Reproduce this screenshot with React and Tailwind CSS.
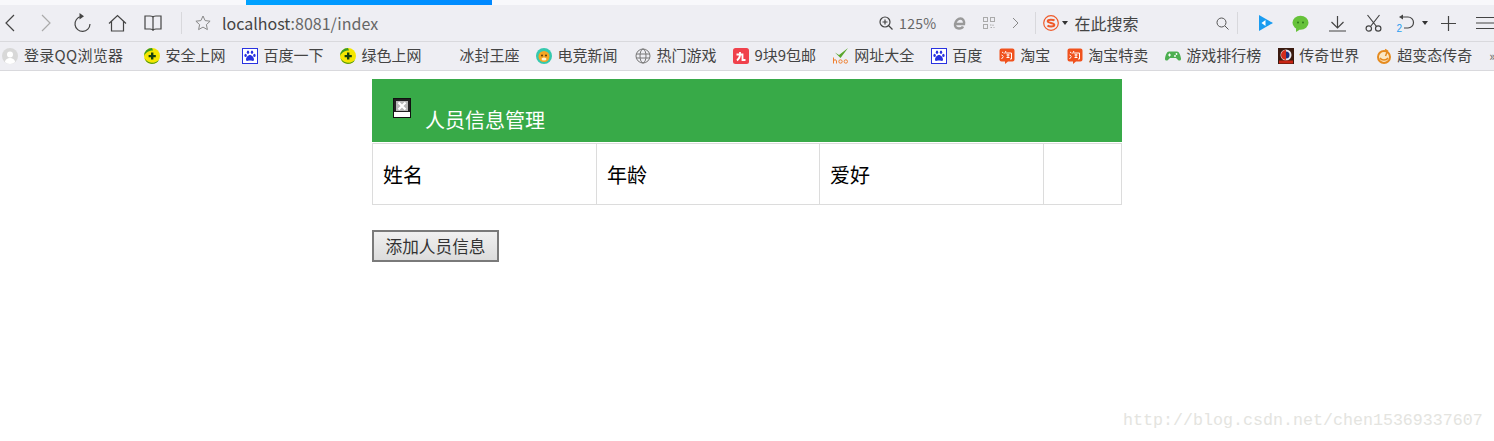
import React from "react";

const Q = () => (
  <svg width="16" height="16" viewBox="0 0 16 16">
    <circle cx="8" cy="8" r="8" fill="#f5e600" />
    <path d="M0.500 10 A8 8 0 0 0 15 12 A9 9 0 0 1 0.500 10Z" fill="#2e8b1e" />
    <path d="M8 0A8 8 0 0 0 0 8C2 4 5 2.500 9 2.500Z" fill="#3a9a24" />
    <path d="M7 4.500h2.400V7h2.400v2.200H9.400v2.400H7V9.200H4.600V7H7Z" fill="#16400f" />
  </svg>
);
const Paw = () => (
  <svg width="16" height="16" viewBox="0 0 16 16">
    <rect x="0.500" y="0.500" width="15" height="15" fill="#fff" stroke="#2932e1" />
    <g fill="#2932e1">
      <ellipse cx="6" cy="4.200" rx="1.200" ry="1.700" />
      <ellipse cx="10" cy="4.200" rx="1.200" ry="1.700" />
      <ellipse cx="3.600" cy="7.400" rx="1.200" ry="1.600" />
      <ellipse cx="12.400" cy="7.400" rx="1.200" ry="1.600" />
      <path d="M8 7c-2 0-4 2.600-4 4.400C4 13 5.400 13 6 12.800c1.300-.4 2.700-.4 4 0 .6.200 2 .2 2-1.400C12 9.600 10 7 8 7Z" />
    </g>
  </svg>
);
const Tiger = () => (
  <svg width="16" height="16" viewBox="0 0 16 16">
    <circle cx="8" cy="8" r="8" fill="#35c9ae" />
    <circle cx="8" cy="8.500" r="5.500" fill="#f5a623" />
    <circle cx="6" cy="7.500" r="1" fill="#5a3a10" />
    <circle cx="10" cy="7.500" r="1" fill="#5a3a10" />
    <ellipse cx="8" cy="11" rx="2.500" ry="1.600" fill="#fff3d6" />
  </svg>
);
const Globe = () => (
  <svg width="16" height="16" viewBox="0 0 16 16" fill="none" stroke="#777" strokeWidth="1">
    <circle cx="8" cy="8" r="7" />
    <ellipse cx="8" cy="8" rx="3" ry="7" />
    <path d="M1 6h14M1 10h14" />
  </svg>
);
const Nine = () => (
  <svg width="16" height="16" viewBox="0 0 16 16">
    <rect width="16" height="16" rx="2.500" fill="#f0414c" />
    <path d="M3.500 6.500h6v5.500h3M7 4v2.500c0 2.500-1 4.500-3 6" fill="none" stroke="#fff" strokeWidth="1.800" />
  </svg>
);
const Hao = () => (
  <svg width="16" height="16" viewBox="0 0 16 16">
    <path d="M2 4.500 6 7 15 0 7.500 10 2 4.500Z" fill="#5aa62c" />
    <path d="M0.500 9.500v6M0.500 13c0-1.600 3-1.600 3 0v2.500" fill="none" stroke="#f08030" strokeWidth="1" />
    <circle cx="7.500" cy="13.500" r="1.700" fill="none" stroke="#f08030" />
    <circle cx="12.800" cy="13.500" r="1.700" fill="none" stroke="#f08030" />
  </svg>
);
const Tao = () => (
  <svg width="16" height="16" viewBox="0 0 16 16">
    <path d="M2.500 0.500h11a2 2 0 0 1 2 2v9a2 2 0 0 1-2 2H9l-3 2.500v-2.500H2.500a2 2 0 0 1-2-2v-9a2 2 0 0 1 2-2Z" fill="#f0521e" />
    <path d="M3 4l1.500 1M2.500 7l1.500 1M2.500 11l2-2.500M7 3 5.500 5.500M6.500 5H12.500V11h-1.500M7.500 7H10.500M9 6v3.500M7.500 9.500H10.500" fill="none" stroke="#fff" strokeWidth="1" />
  </svg>
);
const Game = () => (
  <svg width="16" height="16" viewBox="0 0 16 16">
    <path d="M4 3.500h8c2 0 3.500 3.500 4 7 .3 2.200-2 2.800-3.200 1.200L11 10H5l-1.800 1.700C2 13.300-.3 12.700 0 10.500c.5-3.500 2-7 4-7Z" fill="#4caf50" />
    <path d="M4.500 5.500v3M3 7h3" stroke="#fff" strokeWidth="1" />
    <circle cx="11.500" cy="6" r="0.900" fill="#fff" />
    <circle cx="10" cy="8" r="0.900" fill="#fff" />
  </svg>
);
const Legend = () => (
  <svg width="16" height="16" viewBox="0 0 16 16">
    <rect width="16" height="16" fill="#3a1a10" />
    <circle cx="8" cy="7" r="5.500" fill="#e8e8f0" />
    <path d="M8 2a5 5 0 0 0 0 10Z" fill="#d22c1c" />
    <path d="M8 3.500a3.500 3.500 0 0 1 0 7Z" fill="#1c2f80" />
    <rect x="1" y="12.500" width="14" height="3" fill="#c82414" />
  </svg>
);
const Smile = () => (
  <svg width="16" height="16" viewBox="0 0 16 16" fill="none">
    <circle cx="8" cy="9" r="6" stroke="#e58a1f" strokeWidth="2" fill="#fbe7c4" />
    <path d="M9 1.500 11.500 3 9.500 8" stroke="#e58a1f" strokeWidth="1.500" />
    <path d="M4 10c1.500 2.500 6.500 2.500 8 0" stroke="#e58a1f" strokeWidth="1.500" />
  </svg>
);
const Avatar = () => (
  <svg width="16" height="16" viewBox="0 0 16 16">
    <circle cx="8" cy="8" r="8" fill="#d8d8d8" />
    <circle cx="8" cy="6.500" r="3" fill="#fff" />
    <path d="M2.800 14c.8-3 2.800-4 5.200-4s4.400 1 5.200 4A8 8 0 0 1 2.800 14Z" fill="#fff" />
  </svg>
);
const Broken = () => (
  <svg width="18" height="20" viewBox="0 0 18 20">
    <rect x="0.500" y="0.500" width="17" height="19" fill="#fff" stroke="#111" />
    <rect x="1" y="1" width="16" height="13" fill="#222" />
    <rect x="3" y="3" width="12" height="10" fill="#b8b8b8" />
    <path d="M5.500 4.500 12.500 11.500M12.500 4.500 5.500 11.500" stroke="#fff" strokeWidth="2.200" />
  </svg>
);

const marks = [
  [Q, "安全上网", "ml-[10px]"],
  [Paw, "百度一下", "ml-[17px]"],
  [Q, "绿色上网", "ml-[17px]"],
  [null, "冰封王座", "ml-[38px]"],
  [Tiger, "电竞新闻", "ml-[17px]"],
  [Globe, "热门游戏", "ml-[18px]"],
  [Nine, "9块9包邮", "ml-[17px]"],
  [Hao, "网址大全", "ml-[17px]"],
  [Paw, "百度", "ml-[17px]"],
  [Tao, "淘宝", "ml-[17px]"],
  [Tao, "淘宝特卖", "ml-[17px]"],
  [Game, "游戏排行榜", "ml-[17px]"],
  [Legend, "传奇世界", "ml-[17px]"],
  [Smile, "超变态传奇", "ml-[17px]"],
];

const line = { fill: "none", stroke: "#444", strokeWidth: 1.2 };

function Toolbar() {
  return (
    <div className="flex h-[37px] items-center bg-[#eeeef3] border-b border-[#d9d9dd] text-[#555] whitespace-nowrap [&>*]:shrink-0">
      <svg className="ml-[4px]" width="12" height="18" viewBox="0 0 12 18" {...line}><path d="M10 1 2 9l8 8" /></svg>
      <svg className="ml-[24px]" width="12" height="18" viewBox="0 0 12 18" fill="none" stroke="#aaa" strokeWidth="1.200"><path d="m2 1 8 8-8 8" /></svg>
      <svg className="ml-[21px]" width="18" height="20" viewBox="0 0 18 20" {...line}><path d="M8 3.500a7.500 7.500 0 1 0 9 7.500" /><path d="M6.500 0 11 3.200 6.500 6.500" fill="#444" stroke="none" /></svg>
      <svg className="ml-[17px]" width="19" height="18" viewBox="0 0 19 18" {...line}><path d="M1 9.500 9.500 1.500 18 9.500M3.500 7.500V17h12V7.500" /></svg>
      <svg className="ml-[17px]" width="18" height="18" viewBox="0 0 18 18" {...line}><path d="M1 2h5c1.500 0 3 .5 3 1.500C9 2.500 10.500 2 12 2h5v13h-5c-1.500 0-3 .3-3 1 0-.7-1.500-1-3-1H1ZM9 3.500V17" /></svg>
      <div className="ml-[19px] h-[22px] w-px bg-[#d8d8dc]" />
      <svg className="ml-[13px]" width="16" height="16" viewBox="0 0 16 16" fill="none" stroke="#888" strokeWidth="1"><path d="m8 1 2.100 4.600 5 .6-3.700 3.400 1 5L8 12.100 3.600 14.600l1-5L.9 6.200l5-.6Z" /></svg>
      <span className="ml-[11px] text-[16px] text-[#666] leading-none">
        <span className="text-[#444]">localhost</span>:8081/index
      </span>
      <svg className="ml-[501px]" width="14" height="14" viewBox="0 0 14 14" {...line}><circle cx="6" cy="6" r="5" /><path d="m9.500 9.500 4 4M3.500 6h5M6 3.500v5" /></svg>
      <span className="ml-[6px] text-[14px] text-[#666] tracking-[0.3px] leading-none">125%</span>
      <svg className="ml-[16px]" width="13" height="14" viewBox="0 0 13 14" fill="none" stroke="#999" strokeWidth="2.400"><path d="M2.500 8h8.500C11.500 5 10 2.500 7.500 2.500S2.500 5 2 8s1.500 4.500 4 4.500c2 0 3.500-.8 4-2" /></svg>
      <svg className="ml-[17px]" width="12" height="12" viewBox="0 0 12 12" fill="none" stroke="#aaa" strokeWidth="1"><rect x=".5" y=".5" width="4" height="4" /><rect x="7.500" y=".5" width="4" height="4" /><rect x=".5" y="7.500" width="4" height="4" /><path d="M7 8h1.500M10 7.500v1.500M7.500 10.500H9M10.500 10.500h1" /></svg>
      <svg className="ml-[17px]" width="7" height="12" viewBox="0 0 7 12" fill="none" stroke="#888" strokeWidth="1"><path d="m1 1 5 5-5 5" /></svg>
      <div className="ml-[16px] h-[22px] w-px bg-[#d8d8dc]" />
      <svg className="ml-[7px]" width="16" height="16" viewBox="0 0 16 16" fill="none" stroke="#ef5a2a"><circle cx="8" cy="8" r="7.300" strokeWidth="1.200" /><path d="M11.500 5.500C10.500 4.600 5 4 4.700 6.200 4.500 8.500 11.500 7.500 11.300 10 11 12 5.500 11.500 4.500 10.500" strokeWidth="2" /></svg>
      <svg className="ml-[3px]" width="6" height="4" viewBox="0 0 6 4"><path d="M0 0h6L3 4Z" fill="#333" /></svg>
      <span className="ml-[7px] text-[16px] text-[#444] leading-none">在此搜索</span>
      <svg className="ml-[77px]" width="13" height="13" viewBox="0 0 13 13" fill="none" stroke="#555" strokeWidth="1"><circle cx="5.500" cy="5.500" r="4.500" /><path d="m9 9 3.500 3.500" /></svg>
      <div className="ml-[8px] h-[22px] w-px bg-[#d8d8dc]" />
      <svg className="ml-[21px]" width="14" height="16" viewBox="0 0 14 16"><path d="M0 0 14 8 0 16Z" fill="#1a9cf0" /><path d="M6.500 5 2.500 8l4 3Z" fill="#fff" /></svg>
      <svg className="ml-[19px]" width="17" height="17" viewBox="0 0 17 17"><ellipse cx="8.500" cy="7.800" rx="8" ry="7" fill="#66c23a" /><path d="M4 13v4l4-2.500Z" fill="#66c23a" /><circle cx="6" cy="7.500" r="1" fill="#2f7a1a" /><circle cx="11" cy="7.500" r="1" fill="#2f7a1a" /></svg>
      <svg className="ml-[20px]" width="17" height="17" viewBox="0 0 17 17" {...line}><path d="M8.500 1v11.500M2.500 7l6 6 6-6M0 16h17" /></svg>
      <svg className="ml-[19px]" width="17" height="18" viewBox="0 0 17 18" {...line}><path d="M2.500 1 11.500 12.500M14.500 1 5.500 12.500" /><circle cx="3.800" cy="14.500" r="2.700" /><circle cx="13.200" cy="14.500" r="2.700" /></svg>
      <div className="relative ml-[16px] h-[22px] w-[17px]">
        <svg className="absolute left-0 top-[2px]" width="17" height="15" viewBox="0 0 17 15" {...line}><path d="M3 3h7a5.500 5.500 0 0 1 0 11H6" /><path d="M5 .5 1 3l4 2.500" fill="#444" stroke="none" /></svg>
        <span className="absolute left-[-1px] top-[12px] text-[10px] leading-none text-[#2a9cf0] font-['Liberation_Sans']">2</span>
      </div>
      <svg className="ml-[7px]" width="6" height="4" viewBox="0 0 6 4"><path d="M0 0h6L3 4Z" fill="#333" /></svg>
      <svg className="ml-[13px]" width="15" height="15" viewBox="0 0 15 15" {...line}><path d="M7.500 0v15M0 7.500h15" /></svg>
      <svg className="ml-[20px]" width="18" height="14" viewBox="0 0 18 14" {...line}><path d="M0 1.500h18M0 7h18M0 12.500h18" /></svg>
    </div>
  );
}

function Bookmarks() {
  return (
    <div className="flex h-[29px] items-center bg-[#eeeef3] border-b border-[#d9d9dd] text-[15px] text-[#444] whitespace-nowrap overflow-hidden">
      <div className="ml-[2px]"><Avatar /></div>
      <span className="ml-[6px] mb-[2px] tracking-[0.3px]">登录QQ浏览器</span>
      <div className="ml-[11px] h-[18px] w-px bg-[#d8d8dc]" />
      {marks.map(([Icon, label, gap], i) => (
        <div key={i} className={`flex items-center gap-[5px] ${gap}`}>
          {Icon && <Icon />}
          <span className="mb-[2px]">{label}</span>
        </div>
      ))}
      <span className="ml-[17px] text-[13px] text-[#666]">»</span>
    </div>
  );
}

export default function App() {
  return (
    <div className="w-[1494px] h-[441px] relative overflow-hidden bg-white font-['Noto_Sans_CJK_SC','Noto_Sans',sans-serif]">
      <div className="h-[5px] bg-[#f8f8fb]">
        <div className="ml-[246px] h-full w-[246px] bg-gradient-to-r from-[#00a2ff] to-[#0088ff]" />
      </div>
      <Toolbar />
      <Bookmarks />
      <main className="w-[750px] ml-[372px] mt-[8px]">
        <div className="h-[63px] bg-[#38aa48] flex items-start pl-[21px] pt-[19px]">
          <Broken />
          <h1 className="ml-[14px] mt-[8px] text-[20px] leading-[28px] text-white font-normal">人员信息管理</h1>
        </div>
        <table className="mt-[1px] w-full table-fixed border-collapse text-[20px] text-black">
          <tbody>
            <tr className="h-[61px]">
              <td className="w-[224px] border border-[#dcdcdc] pl-[10px] pt-[1px]">姓名</td>
              <td className="w-[223px] border border-[#dcdcdc] pl-[10px] pt-[1px]">年龄</td>
              <td className="w-[224px] border border-[#dcdcdc] pl-[10px] pt-[1px]">爱好</td>
              <td className="border border-[#dcdcdc]" />
            </tr>
          </tbody>
        </table>
        <button className="block mt-[25px] w-[127px] h-[32px] border-2 border-[#7a7a7a] bg-gradient-to-b from-[#f0f0f0] to-[#dcdcdc] text-[16.67px] leading-none text-[#333]">添加人员信息</button>
      </main>
      <div className="absolute left-[1123px] top-[410px] text-[16.67px] leading-[22px] text-[#e4e4e0] font-['Liberation_Mono',monospace] whitespace-nowrap">http://blog.csdn.net/chen15369337607</div>
    </div>
  );
}
